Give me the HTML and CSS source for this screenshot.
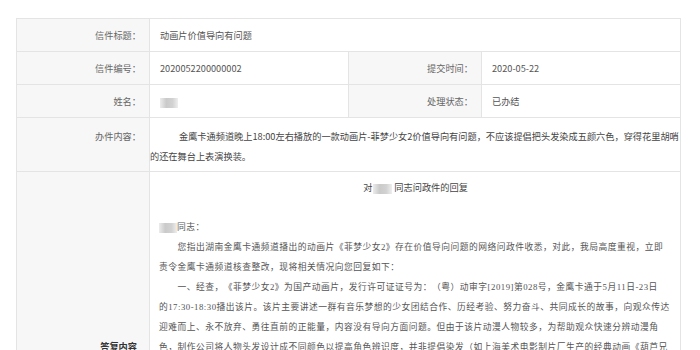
FILE: index.html
```html
<!DOCTYPE html>
<html lang="zh-CN">
<head>
    <meta charset="UTF-8">
    <title>信件详情</title>
    <link rel="stylesheet" href="styles.css">
</head>
<body>

    <div class="letter">
        <table class="letter-table">
            <colgroup>
                <col class="col-label">
                <col class="col-value">
                <col class="col-label">
                <col class="col-value">
            </colgroup>
            <tr>
                <th>信件标题：</th>
                <td colspan="3">动画片价值导向有问题</td>
            </tr>
            <tr>
                <th>信件编号：</th>
                <td>2020052200000002</td>
                <th>提交时间：</th>
                <td>2020-05-22</td>
            </tr>
            <tr>
                <th>姓名：</th>
                <td><span class="mask"></span></td>
                <th>处理状态：</th>
                <td>已办结</td>
            </tr>
            <tr class="row-content">
                <th>办件内容：</th>
                <td colspan="3">
                    <p class="content-text">金鹰卡通频道晚上18:00左右播放的一款动画片-菲梦少女2价值导向有问题，不应该提倡把头发染成五颜六色，穿得花里胡哨的还在舞台上表演换装。</p>
                </td>
            </tr>
            <tr class="row-reply">
                <th class="reply-label">答复内容</th>
                <td colspan="3" class="reply">
                    <h4 class="reply-title">对<span class="mask mask-title"></span>同志问政件的回复</h4>
                    <p class="salute"><span class="mask"></span>同志：</p>
                    <p>您指出湖南金鹰卡通频道播出的动画片《菲梦少女2》存在价值导向问题的网络问政件收悉，对此，我局高度重视，立即责令金鹰卡通频道核查整改，现将相关情况向您回复如下：</p>
                    <p>一、经查，《菲梦少女2》为国产动画片，发行许可证证号为：（粤）动审字[2019]第028号，金鹰卡通于5月11日-23日<span class="nowrap">的17:30-18:30</span>播出该片。该片主要讲述一群有音乐梦想的少女团结合作、历经考验、努力奋斗、共同成长的故事，向观众传达迎难而上、永不放弃、勇往直前的正能量，内容没有导向方面问题。但由于该片动漫人物较多，为帮助观众快速分辨动漫角色，制作公司将人物头发设计成不同颜色以提高角色辨识度，并非提倡染发（如上海美术电影制片厂生产的经典动画《葫芦兄弟》中七个葫芦娃分别以七种颜色区分）。</p>
                    <p>二、下一步，我局将继续督促各广播电视播出机构严格落实节目播前审查和重播重审制度，加强对少儿节目的导向把关，切实为未成年人营造良好的收视环境。同时，我局将进一步加强对动画片的审查把关和监听监看，督促播出机构在引进和播出动画片时更加注重价值导向，及时回应观众关切。</p>
                    <p>感谢您对广播电视工作的关心和支持！</p>
                    <p>特此回复。</p>
                    <p class="sign">湖南省广播电视局</p>
                    <p class="sign">2020年5月26日</p>
                </td>
            </tr>
        </table>
    </div>

</body>
</html>
```

FILE: styles.css
```css
body {
    margin: 0;
    background-color: white;
    font-family: "Noto Sans CJK SC", "Noto Sans", sans-serif;
    font-size: 9.2px;
    color: #555;
}
.letter {
    padding: 18px 22px 0 16px;
}
.letter-table {
    width: 662px;
    table-layout: fixed;
    border-collapse: collapse;
}
.col-label {
    width: 133px;
}
.col-value {
    width: 199px;
}
.letter-table th,
.letter-table td {
    height: 32px;
    border: 1px solid #e4e4e4;
    vertical-align: middle;
}
.letter-table th {
    background-color: #f7f7f7;
    color: #666;
    font-weight: normal;
    text-align: right;
    padding: 0 8px 0 0;
}
.letter-table td {
    padding: 0 10px;
}
.mask {
    display: inline-block;
    width: 18px;
    height: 10px;
    vertical-align: middle;
    background: linear-gradient(90deg, #ececec, #cacaca 35%, #d2d2d2 70%, #eeeeee);
}
.row-content th {
    vertical-align: top;
    padding-top: 8px;
    line-height: 20px;
}
.row-content td {
    padding: 8px 0 5px 0;
}
.content-text {
    margin: 0;
    line-height: 20px;
    text-indent: 29px;
    color: #444;
}
.letter-table .reply-label {
    color: #333;
    font-weight: bold;
    padding-right: 12px;
}
.letter-table .reply {
    padding: 5px 8px 3px 9px;
    vertical-align: top;
}
.reply-title {
    margin: 0 0 20px 0;
    font-size: 9.2px;
    font-weight: normal;
    line-height: 20px;
    text-align: center;
    color: #444;
}
.mask-title {
    width: 19px;
    margin: 0 2px 0 1px;
}
.reply p {
    margin: 0;
    font-family: "Liberation Serif", "Noto Sans CJK SC", serif;
    font-size: 8.75px;
    letter-spacing: 0.5px;
    line-height: 20px;
    text-indent: 18.5px;
    text-spacing-trim: space-all;
    color: #555;
}
.reply .salute {
    text-indent: 0;
}
.reply .sign {
    text-align: right;
}
.nowrap {
    white-space: nowrap;
}
```
